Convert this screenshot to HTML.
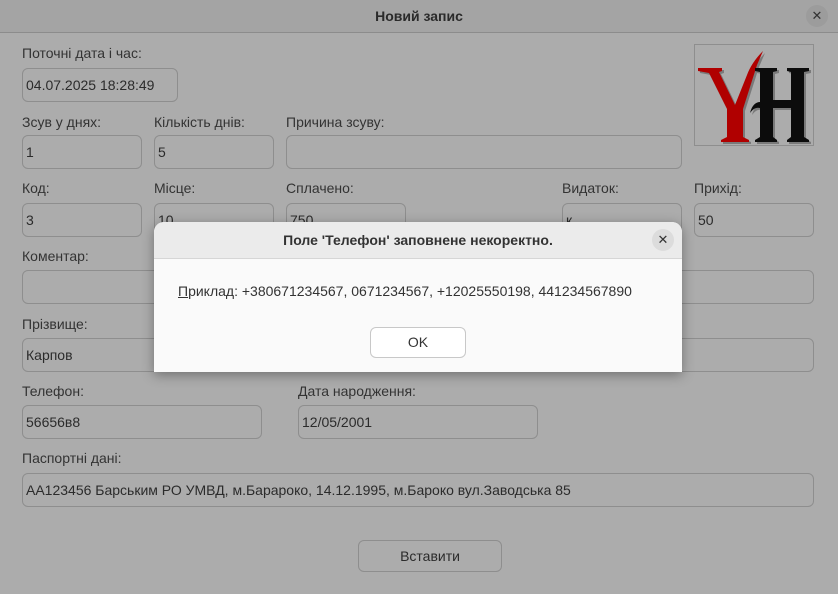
<!DOCTYPE html>
<html><head><meta charset="utf-8"><style>
*{margin:0;padding:0;box-sizing:border-box}
body{width:838px;height:594px;background:#acacac;font-family:"Liberation Sans","DejaVu Sans",sans-serif;font-size:14px;color:#333;position:relative;overflow:hidden}
.tb{position:absolute;left:0;top:0;width:838px;height:33px;background:#a4a4a4;border-bottom:1px solid #8c8c8c}
.tt{position:absolute;top:8px;width:838px;text-align:center;font-weight:bold;font-size:14px;color:#2a2a2a}
.x{position:absolute;width:22px;height:22px;border-radius:50%;background:#9c9c9c;text-align:center;line-height:21px;font-size:13px;color:#333}
.l{position:absolute;color:#333;font-size:14px}
.i{position:absolute;height:34px;border:1px solid #8e8e8e;border-radius:6px;padding:0 0 0 3px;line-height:32px;color:#2b2b2b;font-size:14px;white-space:nowrap;overflow:hidden}
.dlg{position:absolute;left:154px;top:222px;width:528px;height:150px;background:#fafafa;border-radius:10px 10px 0 0;box-shadow:0 3px 12px rgba(0,0,0,.35);overflow:hidden}
.dh{height:37px;background:#ebebeb;border-bottom:1px solid #d6d6d6;text-align:center;font-weight:bold;line-height:37px;color:#333}
</style></head><body>
<div class="tb"></div>
<div class="tt">Новий запис</div>
<div class="x" style="left:806px;top:5px">✕</div>

<div class="l" style="left:22px;top:45px">Поточні дата і час:</div>
<div class="i" style="left:22px;top:68px;width:156px">04.07.2025 18:28:49</div>

<div class="l" style="left:22px;top:114px">Зсув у днях:</div>
<div class="l" style="left:154px;top:114px">Кількість днів:</div>
<div class="l" style="left:286px;top:114px">Причина зсуву:</div>
<div class="i" style="left:22px;top:135px;width:120px">1</div>
<div class="i" style="left:154px;top:135px;width:120px">5</div>
<div class="i" style="left:286px;top:135px;width:396px"></div>

<div style="position:absolute;left:694px;top:44px;width:120px;height:102px;border:1px solid #8e8e8e">
<svg width="118" height="100" viewBox="0 0 118 100" style="display:block">
<g transform="translate(2,2)" fill="#7a7a7a">
<path d="M3 23 H27 V26 L24 27 L40 60 L52 30 C55 22 60 14 68 6 L62 20 L48 64 V92 L54 95 V97 H26 V95 L32 92 V64 L14 28 L3 26 Z"/>
<path d="M60 23 H82 V26 L78 27 V55 H96 V27 L92 26 V23 H114 V26 L109 27 V92 L114 95 V97 H92 V95 L96 92 V63 H78 V92 L82 95 V97 H60 V95 L65 92 V63 C61 62 58 64 55 68 C57 60 61 57 65 57 V27 L60 26 Z"/>
</g>
<path d="M3 23 H27 V26 L24 27 L40 60 L52 30 C55 22 60 14 68 6 L62 20 L48 64 V92 L54 95 V97 H26 V95 L32 92 V64 L14 28 L3 26 Z" fill="#b00000"/>
<path d="M60 23 H82 V26 L78 27 V55 H96 V27 L92 26 V23 H114 V26 L109 27 V92 L114 95 V97 H92 V95 L96 92 V63 H78 V92 L82 95 V97 H60 V95 L65 92 V63 C61 62 58 64 55 68 C57 60 61 57 65 57 V27 L60 26 Z" fill="#0c0c0c"/>
</svg></div>

<div class="l" style="left:22px;top:180px">Код:</div>
<div class="l" style="left:154px;top:180px">Місце:</div>
<div class="l" style="left:286px;top:180px">Сплачено:</div>
<div class="l" style="left:562px;top:180px">Видаток:</div>
<div class="l" style="left:694px;top:180px">Прихід:</div>
<div class="i" style="left:22px;top:203px;width:120px">3</div>
<div class="i" style="left:154px;top:203px;width:120px">10</div>
<div class="i" style="left:286px;top:203px;width:120px">750</div>
<div class="i" style="left:562px;top:203px;width:120px">к</div>
<div class="i" style="left:694px;top:203px;width:120px">50</div>

<div class="l" style="left:22px;top:248px">Коментар:</div>
<div class="i" style="left:22px;top:270px;width:792px"></div>
<div class="l" style="left:22px;top:316px">Прізвище:</div>
<div class="i" style="left:22px;top:338px;width:792px">Карпов</div>

<div class="l" style="left:22px;top:383px">Телефон:</div>
<div class="l" style="left:298px;top:383px">Дата народження:</div>
<div class="i" style="left:22px;top:405px;width:240px">56656в8</div>
<div class="i" style="left:298px;top:405px;width:240px">12/05/2001</div>

<div class="l" style="left:22px;top:450px">Паспортні дані:</div>
<div class="i" style="left:22px;top:473px;width:792px">АА123456 Барським РО УМВД, м.Бараpоко, 14.12.1995, м.Бароко вул.Заводська 85</div>

<div class="i" style="left:358px;top:540px;width:144px;height:32px;text-align:center;line-height:30px;padding:0">Вставити</div>

<div class="dlg">
<div class="dh">Поле 'Телефон' заповнене некоректно.</div>
<div class="x" style="left:498px;top:7px;background:#dcdcdc">✕</div>
<div style="position:absolute;left:24px;top:61px;color:#333"><span style="text-decoration:underline">П</span>риклад: +380671234567, 0671234567, +12025550198, 441234567890</div>
<div style="position:absolute;left:216px;top:105px;width:96px;height:31px;border:1px solid #c8c8c8;border-radius:6px;background:#fff;text-align:center;line-height:29px;color:#333">OK</div>
</div>
</body></html>
